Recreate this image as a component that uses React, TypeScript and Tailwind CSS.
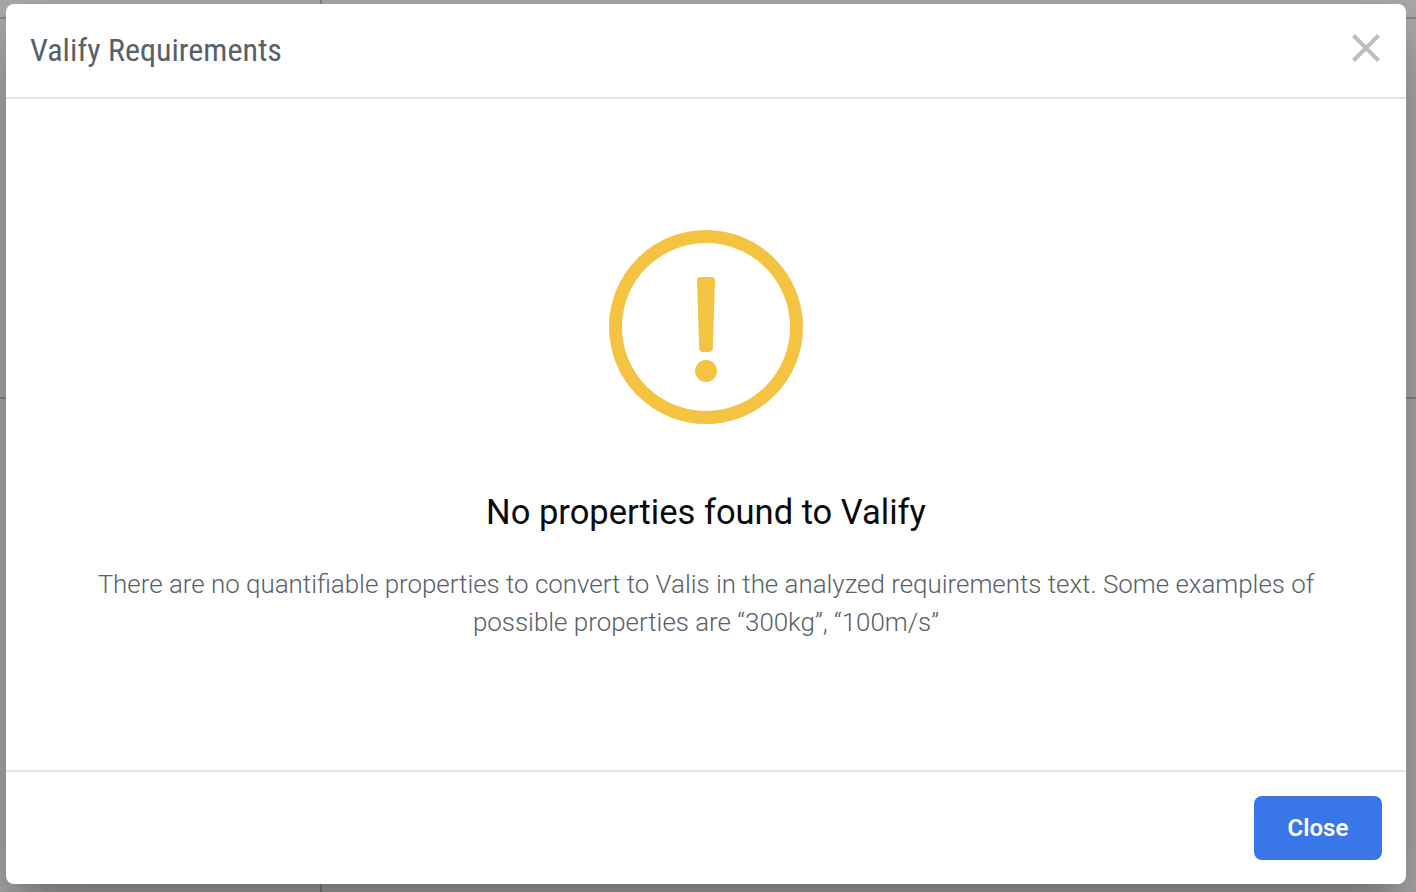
import React, { useState } from 'react';

const message =
  'There are no quantifiable properties to convert to Valis in the analyzed requirements text. Some examples of possible properties are “300kg”, “100m/s”';

const WarningIcon = () => (
  <svg width="194" height="194" viewBox="0 0 194 194" fill="#f5c342" aria-hidden="true">
    <circle cx="97" cy="97" r="90.5" fill="none" stroke="#f5c342" strokeWidth="13" />
    <path d="M91.500 47h11a3.500 3.500 0 0 1 3.500 3.600l-2.200 67.500a4 4 0 0 1-4 3.900h-5.600a4 4 0 0 1-4-3.900L88 50.600a3.500 3.500 0 0 1 3.500-3.600z" />
    <circle cx="97" cy="141" r="11" />
  </svg>
);

const CloseIcon = () => (
  <svg width="28" height="28" viewBox="0 0 28 28" fill="none" stroke="#b9bec2" strokeWidth="4" aria-hidden="true">
    <path d="M1.500 1.500l25 25M26.500 1.500l-25 25" />
  </svg>
);

// Page layout that sits dimmed behind the dialog
const Backdrop = () => (
  <div className="absolute inset-0 flex flex-col bg-[#adadad]">
    <div className="flex h-[19px] shrink-0 border-b-2 border-[#8a8a8a]">
      <div className="w-[322px] border-r-2 border-[#8a8a8a]" />
    </div>
    <div className="flex h-[380px] shrink-0 border-b-2 border-[#8a8a8a]" />
    <div className="flex grow">
      <div className="w-[322px] border-r-2 border-[#8a8a8a]" />
    </div>
  </div>
);

const App = () => {
  const [open, setOpen] = useState(true);

  return (
    <div className="relative h-[892px] w-[1416px] overflow-hidden font-[Roboto,sans-serif]">
      <Backdrop />
      {open && (
        <div
          role="dialog"
          aria-modal="true"
          className="relative ml-1.5 mt-1 flex h-[880px] w-[1400px] flex-col rounded-lg bg-white shadow-[0_22px_30px_-14px_rgba(0,0,0,0.2),0_48px_76px_6px_rgba(0,0,0,0.14),0_18px_92px_16px_rgba(0,0,0,0.12)]"
        >
          <header className="flex h-[95px] shrink-0 items-center justify-between border-b-2 border-[#e3e4e5] pb-0.5 pl-6 pr-[26px]">
            <h2 className="font-['Roboto_Condensed',Roboto,sans-serif] text-[32px] leading-10 text-[#57616a] [font-stretch:75%]">
              Valify Requirements
            </h2>
            <button aria-label="Close dialog" onClick={() => setOpen(false)} className="-mt-1">
              <CloseIcon />
            </button>
          </header>

          <main className="flex grow flex-col items-center px-20 pt-[131px] text-center">
            <WarningIcon />
            <h3 className="mt-16 text-[34.500px] leading-12 text-[#0a0a0a]">No properties found to Valify</h3>
            <p className="mt-[29px] text-[25.900px] font-light leading-[38px] text-[#57616a]">{message}</p>
          </main>

          <footer className="flex h-[114px] shrink-0 items-center justify-end border-t-2 border-[#e3e4e5] px-6">
            <button
              onClick={() => setOpen(false)}
              className="h-16 w-32 rounded-lg bg-[#3976e8] text-[24px] font-semibold text-white"
            >
              Close
            </button>
          </footer>
        </div>
      )}
    </div>
  );
};

export default App;
